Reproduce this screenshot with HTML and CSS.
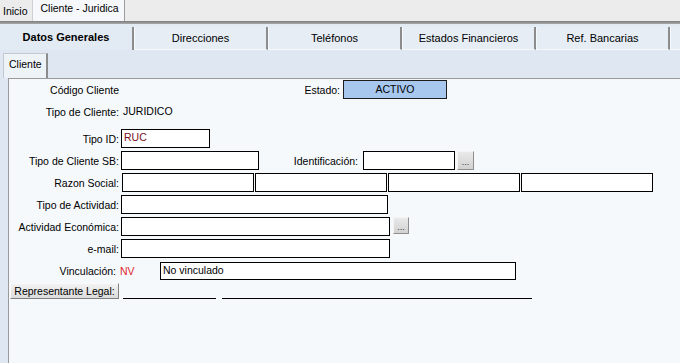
FILE: index.html
```html
<!DOCTYPE html>
<html lang="es">
<head>
    <meta charset="UTF-8">
    <meta name="viewport" content="width=device-width, initial-scale=1.0">
    <title>Cliente - Juridica</title>
    <link rel="stylesheet" href="styles.css">
</head>
<body>
    <div class="topbar">
        <span class="top-tab">Inicio</span>
        <span class="top-tab active">Cliente - Juridica</span>
    </div>
    <div class="band"></div>

    <div class="tabs">
        <div class="tab active">Datos Generales</div>
        <div class="tab">Direcciones</div>
        <div class="tab">Teléfonos</div>
        <div class="tab">Estados Financieros</div>
        <div class="tab">Ref. Bancarias</div>
        <div class="tab last"></div>
    </div>

    <div class="sub-area">
        <div class="sub-tabs">
            <span class="sub-tab">Cliente</span>
        </div>

        <div class="panel">
            <div class="row">
                <span class="label">Código Cliente</span>
                <span class="label label-estado">Estado:</span>
                <div class="status-box">ACTIVO</div>
            </div>

            <div class="row">
                <span class="label">Tipo de Cliente:</span>
                <span class="value">JURIDICO</span>
            </div>

            <div class="row spaced">
                <span class="label">Tipo ID:</span>
                <div class="field w-id dark-red">RUC</div>
            </div>

            <div class="row">
                <span class="label">Tipo de Cliente SB:</span>
                <div class="field w-sb"></div>
                <span class="label label-ident">Identificación:</span>
                <div class="field w-ident"></div>
                <button class="dots">...</button>
            </div>

            <div class="row">
                <span class="label">Razon Social:</span>
                <div class="field-group">
                    <div class="field w-razon"></div>
                    <div class="field w-razon"></div>
                    <div class="field w-razon"></div>
                    <div class="field w-razon"></div>
                </div>
            </div>

            <div class="row">
                <span class="label">Tipo de Actividad:</span>
                <div class="field w-act"></div>
            </div>

            <div class="row">
                <span class="label">Actividad Económica:</span>
                <div class="field w-long"></div>
                <button class="dots small">...</button>
            </div>

            <div class="row">
                <span class="label">e-mail:</span>
                <div class="field w-long"></div>
            </div>

            <div class="row">
                <span class="label label-vinc">Vinculación:</span>
                <span class="code-red">NV</span>
                <div class="field w-vinc">No vinculado</div>
            </div>

            <div class="row top">
                <button class="rep-btn">Representante Legal:</button>
                <span class="underline w-line1"></span>
                <span class="underline w-line2"></span>
            </div>
        </div>
    </div>
</body>
</html>
```

FILE: styles.css
```css
* {
    margin: 0;
    padding: 0;
    box-sizing: border-box;
}

html, body {
    height: 100%;
}

body {
    font-family: 'Liberation Sans', Arial, sans-serif;
    font-size: 10.5px;
    color: #000;
    background: #f0f0f0;
    display: flex;
    flex-direction: column;
    overflow: hidden;
}

/* top window tabs */
.topbar {
    height: 21px;
    display: flex;
    background: #ececec;
}

.top-tab {
    padding: 5px 4px 0 3px;
    line-height: 12px;
}

.top-tab.active {
    width: 93px;
    padding: 2px 0 0 8px;
    background: #f6f8fb;
    border-left: 1px solid #cfcfcf;
    border-right: 1px solid #9c9c9c;
}

.band {
    height: 3px;
    background: linear-gradient(#7c7c7c, #a9a9a9);
}

/* page tabs */
.tabs {
    height: 26px;
    display: flex;
    background: #e2eaf3;
}

.tab {
    flex: 0 0 134px;
    height: 23px;
    margin-top: 3px;
    display: flex;
    align-items: center;
    justify-content: center;
    font-size: 11px;
    background: #e6edf5;
    border-left: 1px solid #f6f9fc;
    border-bottom: 1px solid #f6f9fc;
    border-right: 2px solid #8c8c8c;
}

.tab.active {
    font-weight: bold;
    background: #e2eaf3;
    border-left: none;
    border-bottom: none;
    padding-bottom: 4px;
}

.tab.last {
    flex: 1;
    border-right: none;
}

/* sub tabs + panel */
.sub-area {
    flex: 1;
    display: flex;
    flex-direction: column;
    background: #dfe8f2;
}

.sub-tabs {
    height: 28px;
    display: flex;
    padding: 3px 0 0 3px;
}

.sub-tab {
    height: 25px;
    padding: 4px 4px 0 5px;
    line-height: 13px;
    background: #eef3f8;
    border-left: 1px solid #c4c9cf;
    border-top: 1px solid #c4c9cf;
    border-right: 2px solid #8c8c8c;
}

.panel {
    flex: 1;
    margin-left: 8px;
    padding-top: 1px;
    background: #f6f9fc;
    border-left: 1px solid #9a9a9a;
    border-top: 1px solid #9a9a9a;
    display: flex;
    flex-direction: column;
    gap: 3px;
}

.row {
    height: 19px;
    display: flex;
    align-items: center;
}

.row.spaced {
    margin-top: 5px;
}

.row.top {
    align-items: flex-start;
}

.label {
    flex: 0 0 110px;
    text-align: right;
    white-space: nowrap;
}

.label-estado {
    flex-basis: 221px;
}

.label-ident {
    flex-basis: 100px;
    padding-right: 1px;
}

.label-vinc {
    padding-right: 3px;
}

.value {
    margin-left: 4px;
    margin-bottom: 2px;
}

.status-box {
    width: 104px;
    height: 19px;
    margin-left: 3px;
    padding-top: 2px;
    text-align: center;
    background: #a7c7ef;
    border: 1px solid #1c1c1c;
}

.field {
    height: 19px;
    margin-left: 2px;
    padding: 1px 2px 0;
    background: #fff;
    border: 1px solid #000;
    white-space: nowrap;
}

.field-group {
    display: flex;
    gap: 1px;
    margin-left: 3px;
}

.field-group .field {
    margin-left: 0;
}

.w-id { width: 89px; }
.w-sb { width: 138px; }
.w-ident { width: 92px; margin-left: 4px; }
.w-razon { width: 132px; }
.w-act { width: 267px; }
.w-long { width: 269px; }
.w-vinc { width: 356px; height: 18px; }

.dark-red {
    color: #7a0f1a;
}

.code-red {
    width: 39px;
    padding-left: 1px;
    color: #e0262b;
}

.dots {
    width: 17px;
    height: 19px;
    margin-left: 2px;
    font-family: 'Liberation Sans', Arial, sans-serif;
    font-size: 9px;
    line-height: 20px;
    color: #333;
    background: linear-gradient(#e9e9e9, #d2d2d2);
    border: 1px solid;
    border-color: #f4f4f4 #8e8e8e #8e8e8e #f4f4f4;
}

.dots.small {
    width: 16px;
    height: 17px;
    margin-left: 3px;
    line-height: 18px;
    align-self: flex-start;
}

.rep-btn {
    width: 109px;
    height: 16px;
    margin-left: 1px;
    font-family: 'Liberation Sans', Arial, sans-serif;
    font-size: 10.5px;
    line-height: 13px;
    color: #000;
    background: linear-gradient(#f2f2f2, #dcdcdc);
    border: 1px solid;
    border-color: #fafafa #808080 #808080 #fafafa;
}

.underline {
    height: 16px;
    border-bottom: 1px solid #000;
}

.w-line1 { width: 93px; margin-left: 4px; }
.w-line2 { width: 310px; margin-left: 6px; }
```
